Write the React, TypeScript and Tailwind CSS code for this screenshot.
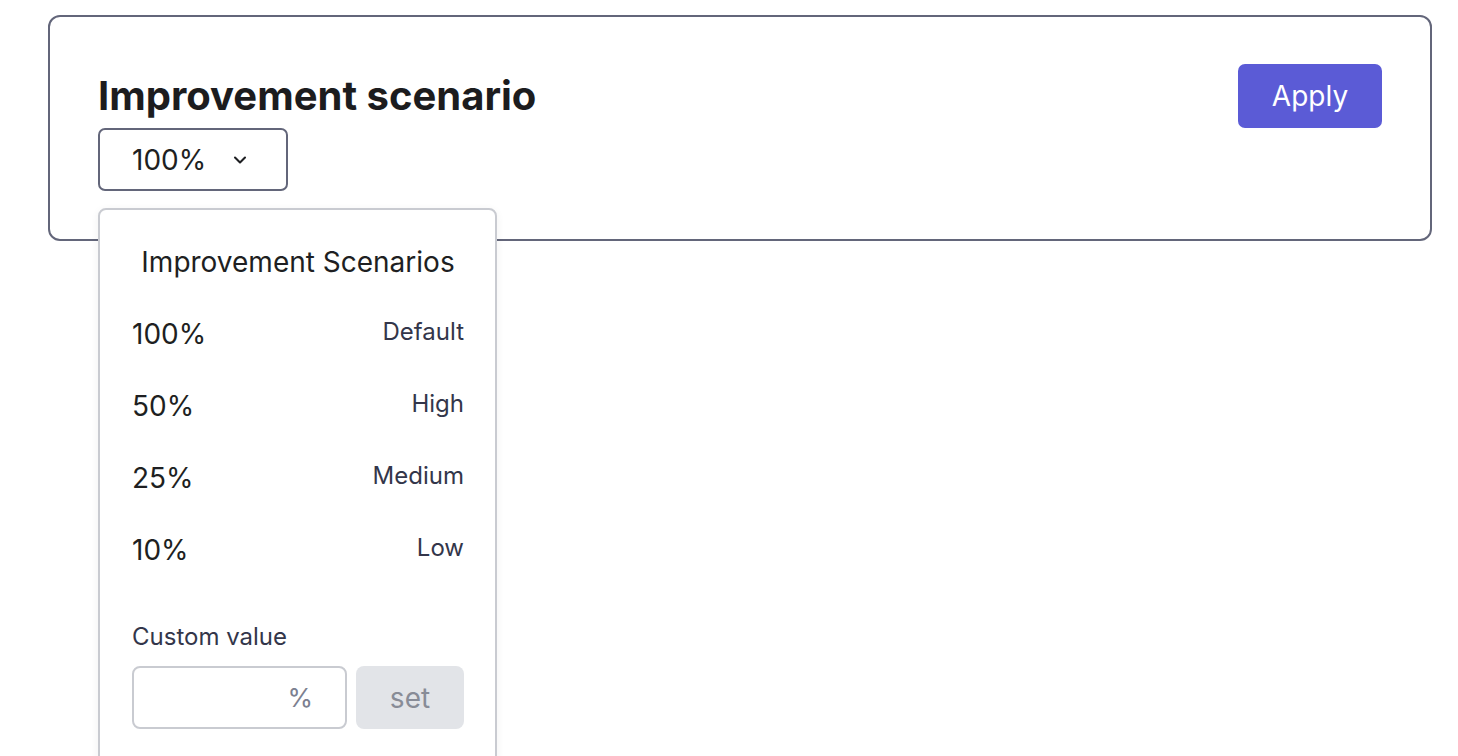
import { ChevronDown } from "lucide-react";

const scenarios = [
  { value: "100%", label: "Default" },
  { value: "50%", label: "High" },
  { value: "25%", label: "Medium" },
  { value: "10%", label: "Low" },
];

export default function App() {
  return (
    <div className="min-h-screen bg-white font-['Inter',sans-serif] text-[#1e1f22]">
      <div className="pl-[48px] pt-[15px]">
        <div className="relative flex w-[1384px] items-start justify-between rounded-[12px] border-2 border-[#63667a] px-[48px] pb-[48px] pt-[47px]">
          <div className="relative">
            <h1 className="text-[40px] font-bold leading-[64px] text-[#1c1c1e]">Improvement scenario</h1>
            <button className="flex h-[63px] w-[190px] items-center gap-[24px] rounded-[7px] border-2 border-[#63667a] pl-[32px] text-[28px] text-[#1e1f22]">
              100%
              <ChevronDown size={20} strokeWidth={2.5} className="mt-[1px]" />
            </button>

            {/* popover */}
            <div className="absolute left-0 top-[144px] z-10 h-[560px] w-[399px] rounded-[8px] border-2 border-[#c9cbd1] bg-white pl-[32px] pr-[31px] pt-[30px] shadow-[0_2px_8px_rgba(0,0,0,0.06)]">
              <div className="text-center text-[28px] leading-[44px] text-[#1e1f22]">Improvement Scenarios</div>
              <div className="mt-[12px]">
                {scenarios.map((s) => (
                  <div key={s.value} className="flex h-[72px] items-center justify-between">
                    <span className="mt-[3px] text-[28px] text-[#1e1f22]">{s.value}</span>
                    <span className="text-[24px] text-[#33364a]">{s.label}</span>
                  </div>
                ))}
              </div>
              <div className="mt-[37px] text-[24px] leading-[32px] text-[#33364a]">Custom value</div>
              <div className="mt-[13px] flex gap-[9px]">
                <div className="flex h-[63px] w-[215px] items-center justify-end rounded-[8px] border-2 border-[#c9cbd1] pr-[32px] text-[26px] text-[#7c8090]">
                  %
                </div>
                <button className="flex h-[63px] flex-1 items-center justify-center rounded-[8px] bg-[#e2e4e8] text-[28px] text-[#888c97]">
                  set
                </button>
              </div>
            </div>
          </div>
          <button className="h-[64px] w-[144px] rounded-[7px] bg-[#5b5bd6] text-[28px] text-white">Apply</button>
        </div>
      </div>
    </div>
  );
}
